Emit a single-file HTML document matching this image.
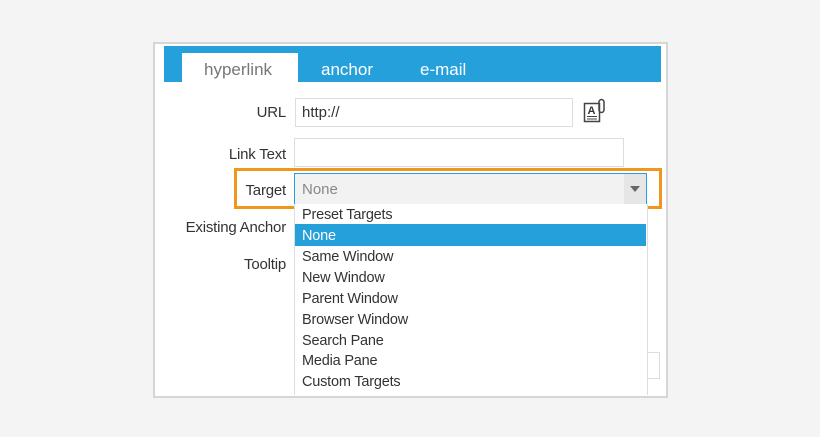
<!DOCTYPE html>
<html><head><style>
body{margin:0;width:820px;height:437px;background:#f4f4f4;font-family:"Liberation Sans",sans-serif;position:relative;overflow:hidden}
.a{position:absolute}
.lbl{position:absolute;font-size:15px;color:#333;text-align:right;width:140px;letter-spacing:-0.2px}
.it{position:absolute;left:302px;font-size:14.5px;color:#333;letter-spacing:-0.2px}
</style></head><body>
<div class="a" style="left:153px;top:42px;width:511px;height:352px;background:#fff;border:2px solid #d6d6d6"></div>
<div class="a" style="left:164px;top:46px;width:497px;height:36px;background:#25a0da"></div>
<div class="a" style="left:182px;top:53px;width:116px;height:29px;background:#fff"></div>
<div class="a" style="left:204px;top:60px;font-size:17px;color:#777">hyperlink</div>
<div class="a" style="left:321px;top:60px;font-size:17px;color:#fff">anchor</div>
<div class="a" style="left:420px;top:60px;font-size:17px;color:#fff">e-mail</div>
<div class="lbl" style="left:146px;top:104px">URL</div>
<div class="a" style="left:295px;top:98px;width:276px;height:27px;border:1px solid #ddd"></div>
<div class="a" style="left:302px;top:104px;font-size:15px;color:#333">http://</div>
<svg class="a" style="left:583px;top:98px" width="24" height="26" viewBox="0 0 24 26"><rect x="1.5" y="5.5" width="15" height="18" fill="#fff" stroke="#444" stroke-width="1.5"/><text x="4.5" y="16" font-size="11" font-weight="bold" font-family="Liberation Sans" fill="#333">A</text><line x1="4" y1="18.5" x2="14" y2="18.5" stroke="#444"/><line x1="4" y1="21" x2="14" y2="21" stroke="#444"/><path d="M16 12V4a2.5 2.5 0 0 1 5 0v8a2.5 2.5 0 0 1-5 0" fill="none" stroke="#444" stroke-width="1.5"/></svg>
<div class="lbl" style="left:146px;top:146px">Link Text</div>
<div class="a" style="left:294px;top:138px;width:328px;height:27px;border:1px solid #ddd"></div>
<div class="a" style="left:234px;top:168px;width:422px;height:35px;border:3px solid #f0961e"></div>
<div class="lbl" style="left:146px;top:182px">Target</div>
<div class="a" style="left:294px;top:173px;width:351px;height:30px;background:#f2f2f2;border:1px solid #25a0da;border-bottom:none"></div>
<div class="a" style="left:302px;top:181px;font-size:15px;color:#888">None</div>
<div class="a" style="left:624px;top:174px;width:22px;height:30px;background:#e6e6e6"></div>
<div class="a" style="left:630px;top:186px;border-left:5px solid transparent;border-right:5px solid transparent;border-top:6px solid #666"></div>
<div class="lbl" style="left:146px;top:219px">Existing Anchor</div>
<div class="lbl" style="left:146px;top:256px">Tooltip</div>
<div class="a" style="left:648px;top:352px;width:11px;height:25px;border:1px solid #ddd;border-left:none"></div>
<div class="a" style="left:294px;top:204px;width:352px;height:191px;background:#fff;border-left:1px solid #ddd;border-right:1px solid #ddd"></div>
<div class="a" style="left:295px;top:224px;width:351px;height:22px;background:#25a0da"></div>
<div class="it" style="top:207px">Preset Targets</div>
<div class="it" style="top:228px;color:#fff">None</div>
<div class="it" style="top:249px">Same Window</div>
<div class="it" style="top:270px">New Window</div>
<div class="it" style="top:291px">Parent Window</div>
<div class="it" style="top:312px">Browser Window</div>
<div class="it" style="top:333px">Search Pane</div>
<div class="it" style="top:353px">Media Pane</div>
<div class="it" style="top:374px">Custom Targets</div>
</body></html>
